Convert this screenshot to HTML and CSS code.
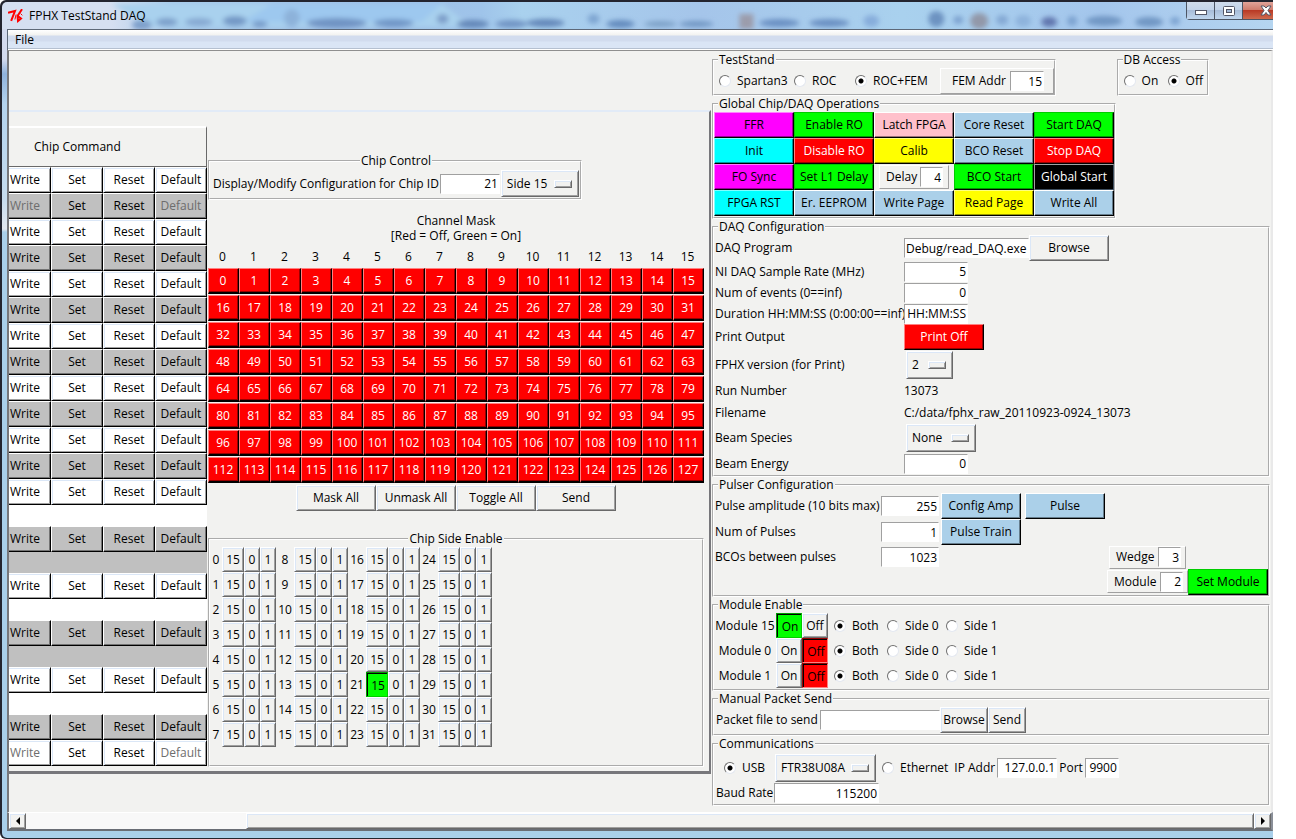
FILE: index.html
```html
<!DOCTYPE html>
<html lang="en">
<head>
<meta charset="utf-8">
<title>FPHX TestStand DAQ</title>
<link rel="stylesheet" href="styles.css">
</head>
<body>
<div class="window">
  <header class="titlebar">
    <svg class="glass" aria-hidden="true" viewBox="0 0 1272 27" preserveAspectRatio="none">
      <defs><filter id="soft" x="-20%" y="-60%" width="140%" height="220%"><feGaussianBlur stdDeviation="2.500"/></filter></defs>
      <g filter="url(#soft)">
        <path d="M110 2H440L470 25H150Z" fill="#a9d1ee"/>
        <path d="M270 2H440L420 20H240Z" fill="#9dc8ef"/>
        <ellipse cx="140" cy="23" rx="10" ry="5" fill="#7d9fca"/>
        <ellipse cx="165" cy="20" rx="11" ry="4" fill="#7c9fca"/><ellipse cx="197" cy="20" rx="14" ry="4" fill="#86a9d2"/>
        <ellipse cx="233" cy="19" rx="12" ry="5" fill="#7398c6"/><ellipse cx="258" cy="22" rx="8" ry="3" fill="#7398c6"/>
        <ellipse cx="290" cy="16" rx="8" ry="9" fill="#8db2da"/>
        <ellipse cx="335" cy="21" rx="30" ry="5" fill="#6f93c3"/><ellipse cx="392" cy="21" rx="20" ry="4" fill="#6f95c6"/>
        <ellipse cx="441" cy="17" rx="6" ry="5" fill="#7e9fca"/>
        <ellipse cx="471" cy="22" rx="16" ry="4" fill="#6487b8"/><ellipse cx="510" cy="22" rx="16" ry="4" fill="#7194c4"/><ellipse cx="544" cy="21" rx="19" ry="4" fill="#6387b9"/>
        <ellipse cx="592" cy="17" rx="6" ry="5" fill="#7fa6d2"/>
        <ellipse cx="619" cy="22" rx="14" ry="4" fill="#648bbd"/><ellipse cx="659" cy="22" rx="16" ry="3" fill="#7ca0c6"/><ellipse cx="695" cy="22" rx="17" ry="3" fill="#7095c2"/>
        <rect x="738" y="12" width="14" height="15" fill="#9b9cab"/>
        <ellipse cx="778" cy="21" rx="20" ry="4" fill="#6b90c3"/><ellipse cx="828" cy="21" rx="20" ry="4" fill="#6b90c3"/>
        <ellipse cx="870" cy="19" rx="8" ry="6" fill="#87addb"/>
        <ellipse cx="935" cy="17" rx="8" ry="8" fill="#6d93c1"/><ellipse cx="957" cy="18" rx="5" ry="4" fill="#7ba1cf"/>
        <ellipse cx="978" cy="19" rx="9" ry="8" fill="#9298a9"/><ellipse cx="1001" cy="18" rx="6" ry="5" fill="#84a9d4"/>
        <ellipse cx="1022" cy="19" rx="8" ry="6" fill="#8eb3dc"/><ellipse cx="1048" cy="20" rx="8" ry="5" fill="#6176ae"/>
        <ellipse cx="1071" cy="19" rx="5" ry="5" fill="#7da3d0"/><ellipse cx="1103" cy="19" rx="18" ry="5" fill="#7197c4"/>
        <ellipse cx="1148" cy="20" rx="14" ry="5" fill="#7197c4"/><ellipse cx="1174" cy="19" rx="5" ry="4" fill="#7ca3d0"/>
      </g>
    </svg>
    <svg class="app-icon" aria-hidden="true" viewBox="0 0 16 14"><g fill="none" stroke="#f00" stroke-linecap="square"><path d="M1 3.500L7 2L3.500 11" stroke-width="2"/><path d="M13.500 1L9.500 7L10 12L13 9.500L11 8" stroke-width="2"/><path d="M8 6L7 10M13 5L14 6" stroke-width="1"/></g></svg>
    <h1 class="title">FPHX TestStand DAQ</h1>
    <div class="caption-buttons">
      <button type="button" class="caption" aria-label="Minimize"><svg viewBox="0 0 12 5" width="12" height="5"><rect x=".5" y=".5" width="11" height="4" fill="#fff" stroke="#535666"/></svg></button>
      <button type="button" class="caption" aria-label="Maximize"><svg viewBox="0 0 12 10" width="12" height="10"><rect x=".5" y=".5" width="11" height="9" rx="1" fill="#fff" stroke="#535666"/><rect x="3.500" y="3.500" width="5" height="3" fill="#a4bad8" stroke="#535666"/></svg></button>
      <button type="button" class="caption caption-close" aria-label="Close"><svg viewBox="0 0 12 11" width="12" height="11"><path d="M1 1H4L6 3L8 1H11L8 5.500L11 10H8L6 7.500L4 10H1L4 5.500Z" fill="#fff" stroke="#535666"/></svg></button>
    </div>
  </header>

  <div class="frame">
    <nav class="menubar"><button type="button" class="menu">File</button></nav>
    <main class="client">
      <section class="chip-frame">
        <div class="commands">
          <div class="commands-head">Chip Command</div>
          <div id="command-rows"></div>
        </div>
        <div class="chip">
          <fieldset class="group chip-control">
            <legend>Chip Control</legend>
            <label for="chip-id">Display/Modify Configuration for Chip ID</label>
            <input id="chip-id" class="entry entry-c" value="21">
            <span class="option"><select class="btn w-78" aria-label="Chip side"><option>Side 15</option></select></span>
          </fieldset>
          <div class="mask-title">Channel Mask<br>[Red = Off, Green = On]</div>
          <div class="mask-head" id="mask-head"></div>
          <div class="mask" id="mask"></div>
          <div class="mask-actions">
            <button type="button" class="btn">Mask All</button><button type="button" class="btn">Unmask All</button><button type="button" class="btn">Toggle All</button><button type="button" class="btn">Send</button>
          </div>
          <fieldset class="group side-enable">
            <legend>Chip Side Enable</legend>
            <div class="sides" id="sides"></div>
          </fieldset>
        </div>
      </section>

      <section class="panel">
        <div class="top-row">
          <fieldset class="group test-stand">
            <legend>TestStand</legend>
            <label class="radio w-75"><input type="radio" name="stand">Spartan3</label>
            <label class="radio w-61"><input type="radio" name="stand">ROC</label>
            <label class="radio w-75"><input type="radio" name="stand" checked>ROC+FEM</label>
            <div class="raised fem"><label for="fem">FEM Addr</label><input id="fem" class="entry entry-s" value="15"></div>
          </fieldset>
          <fieldset class="group db-access">
            <legend>DB Access</legend>
            <label class="radio w-44"><input type="radio" name="db">On</label>
            <label class="radio"><input type="radio" name="db" checked>Off</label>
          </fieldset>
        </div>

        <fieldset class="group operations">
          <legend>Global Chip/DAQ Operations</legend>
          <div class="ops">
            <button type="button" class="btn magenta">FFR</button><button type="button" class="btn green">Enable RO</button><button type="button" class="btn pink">Latch FPGA</button><button type="button" class="btn blue">Core Reset</button><button type="button" class="btn green">Start DAQ</button>
            <button type="button" class="btn cyan">Init</button><button type="button" class="btn red">Disable RO</button><button type="button" class="btn yellow">Calib</button><button type="button" class="btn blue">BCO Reset</button><button type="button" class="btn red">Stop DAQ</button>
            <button type="button" class="btn magenta">FO Sync</button><button type="button" class="btn green">Set L1 Delay</button><div class="raised delay"><label for="delay">Delay</label><input id="delay" class="entry entry-xs" value="4"></div><button type="button" class="btn green">BCO Start</button><button type="button" class="btn black">Global Start</button>
            <button type="button" class="btn cyan">FPGA RST</button><button type="button" class="btn blue">Er. EEPROM</button><button type="button" class="btn blue">Write Page</button><button type="button" class="btn yellow">Read Page</button><button type="button" class="btn blue">Write All</button>
          </div>
        </fieldset>

        <fieldset class="group">
          <legend>DAQ Configuration</legend>
          <div class="daq">
            <label for="program">DAQ Program</label><div><input id="program" class="entry entry-l" value="Debug/read_DAQ.exe"><button type="button" class="btn">Browse</button></div>
            <label for="rate">NI DAQ Sample Rate (MHz)</label><div><input id="rate" class="entry entry-m" value="5"></div>
            <label for="events">Num of events (0==inf)</label><div><input id="events" class="entry entry-m" value="0"></div>
            <label for="duration">Duration HH:MM:SS (0:00:00==inf)</label><div><input id="duration" class="entry entry-m" value="HH:MM:SS"></div>
            <label for="print">Print Output</label><div><button type="button" id="print" class="btn red">Print Off</button></div>
            <label for="version">FPHX version (for Print)</label><div class="inset"><span class="option"><select id="version" class="btn w-47"><option>2</option></select></span></div>
            <span>Run Number</span><div><output>13073</output></div>
            <label for="file">Filename</label><div><input id="file" class="plain" readonly value="C:/data/fphx_raw_20110923-0924_13073"></div>
            <label for="species">Beam Species</label><div class="inset"><span class="option"><select id="species" class="btn w-70"><option>None</option></select></span></div>
            <label for="energy">Beam Energy</label><div><input id="energy" class="entry entry-m" value="0"></div>
          </div>
        </fieldset>

        <fieldset class="group">
          <legend>Pulser Configuration</legend>
          <div class="pulser">
            <div class="field"><label for="amp">Pulse amplitude (10 bits max)</label><input id="amp" class="entry entry-p" value="255"></div><button type="button" class="btn blue">Config Amp</button><button type="button" class="btn blue pulse">Pulse</button>
            <div class="field"><label for="pulses">Num of Pulses</label><input id="pulses" class="entry entry-p" value="1"></div><button type="button" class="btn blue">Pulse Train</button>
            <div class="field"><label for="bcos">BCOs between pulses</label><input id="bcos" class="entry entry-p" value="1023"></div><div class="raised wedge"><label for="wedge">Wedge</label><input id="wedge" class="entry entry-xs" value="3"></div>
            <div class="raised module"><label for="module">Module</label><input id="module" class="entry entry-xs" value="2"></div><button type="button" class="btn green">Set Module</button>
          </div>
        </fieldset>

        <fieldset class="group">
          <legend>Module Enable</legend>
          <div id="modules"></div>
        </fieldset>

        <fieldset class="group">
          <legend>Manual Packet Send</legend>
          <div class="line packet">
            <div class="packet-file"><label for="packet">Packet file to send</label><input id="packet" class="entry"></div>
            <button type="button" class="btn w-48">Browse</button><button type="button" class="btn w-38">Send</button>
          </div>
        </fieldset>

        <fieldset class="group">
          <legend>Communications</legend>
          <div class="line link">
            <label class="radio usb"><input type="radio" name="link" checked>USB</label>
            <span class="option"><select class="btn w-101" aria-label="USB device"><option>FTR38U08A</option></select></span>
            <label class="radio ethernet"><input type="radio" name="link">Ethernet</label>
            <label for="ip">IP Addr</label><input id="ip" class="entry entry-c" value="127.0.0.1">
            <label for="port">Port</label><input id="port" class="entry entry-s" value="9900">
          </div>
          <div class="line baud"><label for="baud">Baud Rate</label><input id="baud" class="entry entry-b" value="115200"></div>
        </fieldset>
      </section>
    </main>
    <div class="scrollbar">
      <button type="button" class="btn arrow" aria-label="Scroll left"><svg viewBox="0 0 4 8" width="4" height="8"><path d="M4 0V8L0 4Z"/></svg></button>
      <div class="trough"></div>
      <div class="thumb"></div>
      <button type="button" class="btn arrow" aria-label="Scroll right"><svg viewBox="0 0 4 8" width="4" height="8"><path d="M0 0V8L4 4Z"/></svg></button>
    </div>
  </div>
</div>
<script src="app.js"></script>
</body>
</html>
```
FILE: app.js
```javascript
const $ = (id) => document.getElementById(id);
const button = (text, cls = "", off = false) =>
  `<button type="button" class="btn ${cls}"${off ? " disabled" : ""}>${text}</button>`;
const range = (n) => Array.from({ length: n }, (_, i) => i);

/* Chip command rows: rows 13 to 17 have a second, empty line under the buttons. */
$("command-rows").innerHTML = range(19).map((i) => {
  const off = i === 1 || i === 18;
  const cls = `${i % 2 ? "odd" : "even"} ${i >= 12 && i <= 16 ? "tall" : ""}`;
  return `<div class="command ${cls}">${button("Write", "", off)}${button("Set")}${button("Reset")}${button("Default", "", off)}</div>`;
}).join("");

$("mask-head").innerHTML = range(16).map((i) => `<span>${i}</span>`).join("");
$("mask").innerHTML = range(128).map((i) => button(i, "red")).join("");

$("sides").innerHTML = range(8).map((row) => range(4).map((col) => {
  const chip = col * 8 + row;
  return `<span>${chip}</span>${button(15, chip === 21 ? "sunken green" : "")}${button(0)}${button(1)}`;
}).join("")).join("");

$("modules").innerHTML = [["Module 15", true], ["Module 0", false], ["Module 1", false]].map(([name, on], i) => {
  const sides = ["Both", "Side 0", "Side 1"].map((side, j) =>
    `<label class="radio"><input type="radio" name="side${i}"${j ? "" : " checked"}>${side}</label>`).join("");
  return `<div class="module-row"><span>${name}</span>${button("On", on ? "sunken green" : "")}${button("Off", on ? "" : "sunken red")}${sides}</div>`;
}).join("");
```
FILE: styles.css
```css
* { box-sizing: border-box; }

:root {
  --face: #f2f2f0;
  --shade: #a0a0a0;
  --dark: #696969;
  --light: #dbe7f7;
}

body {
  margin: 0;
  background: #fff;
  color: #000;
  font: 12px/16px "Open Sans", "Noto Sans", sans-serif;
}

button, input, select { font: inherit; color: inherit; margin: 0; border-radius: 0; }
label { white-space: nowrap; }

.window {
  display: flex;
  flex-direction: column;
  min-height: 100vh;
  margin-right: 23px;
  padding: 2px 0 1px 2px;
  background: #23242f;
  border-top-left-radius: 6px;
  border-bottom-left-radius: 6px;
}

/* Title bar */
.titlebar {
  position: relative;
  display: flex;
  align-items: center;
  height: 27px;
  padding-left: 6px;
  overflow: hidden;
  background: linear-gradient(90deg, #d5dff1 0, #d5dff1 110px, #a8caea 170px, #9ebfe6 380px, #9fc4ea 480px, #a9d1ee 520px, #a5c5ea 700px, #a9d1ee 900px, #a4c6ec 1100px, #b5d5f0 100%);
  border-top-left-radius: 5px;
}
.glass { position: absolute; inset: 0; width: 100%; height: 100%; }
.app-icon { position: relative; width: 16px; height: 14px; }
.title { position: relative; margin: 0 auto 0 5px; font-size: 12px; font-weight: 400; }
.caption-buttons {
  position: relative;
  display: flex;
  align-self: flex-start;
  height: 18px;
  border: solid #4c5564;
  border-width: 0 0 1px 1px;
  border-bottom-left-radius: 4px;
}
.caption {
  display: flex;
  align-items: center;
  justify-content: center;
  width: 28px;
  padding: 0;
  border: 0;
  border-right: 1px solid #4c5564;
  background: linear-gradient(#cfdcec, #c3d4ea 45%, #a8bdd9 50%, #c0d6ee);
}
.caption:first-child { padding-top: 4px; }
.caption-close {
  width: 30px;
  padding-left: 15px;
  border-right: 0;
  background: linear-gradient(#e0a399, #cf7c6d 45%, #b93a25 50%, #cf6a4e);
}

/* Window frame */
.frame {
  flex: 1;
  display: flex;
  flex-direction: column;
  padding: 0 0 7px 5px;
  background: linear-gradient(180deg, #d3daee 0, #d3daee 30px, #8fb2dc 45px, #b4d3ee 75px, #c6dbee 170px, #e3e8ef 200px, #a9cfea 203px, #a9cfea 100%);
  border-bottom-left-radius: 5px;
}
.menubar {
  height: 21px;
  border: solid #5d6878;
  border-width: 1px 0 0 1px;
  background: linear-gradient(#fff 0, #f2f2f0 5px, #d2dcee 6px, #d2dcee 11px, #dae5f5 12px, #dae5f5 18px, #b5c0d0 18px, #b5c0d0 19px, #fff 19px, #fff 100%);
}
.menu { padding: 2px 7px; border: 0; background: none; }
.client {
  flex: 1;
  display: flex;
  background: var(--face);
  border: solid;
  border-width: 1px 2px 0 2px;
  border-color: #8f8f8f #e9e9e9 #8f8f8f #77777b;
}

/* Widgets */
.btn {
  display: flex;
  align-items: center;
  justify-content: center;
  width: 80px;
  height: 26px;
  padding: 0;
  border: 1px solid;
  border-color: #fff var(--dark) var(--dark) #fff;
  background: var(--face);
  box-shadow: inset 1px 1px var(--light), inset -1px -1px var(--shade);
  white-space: nowrap;
}
.btn:disabled { color: #6d6d6d; }
.red, .green, .magenta, .cyan, .yellow, .blue, .pink { border-color: #fff #000 #000 #fff; }
.red { color: #fff; background: #f00; border-color: #ff8080 #000 #000 #ff8080; box-shadow: inset -1px -1px #900; }
.green { background: #0f0; border-color: #0c0 #000 #000 #0c0; box-shadow: inset -1px -1px #090; }
.magenta { background: #f0f; border-color: #ff80ff #000 #000 #ff80ff; box-shadow: inset -1px -1px #909; }
.cyan { background: #0ff; border-color: #80ffff #000 #000 #80ffff; box-shadow: inset -1px -1px #099; }
.yellow { background: #ff0; border-color: #ffff80 #000 #000 #ffff80; box-shadow: inset -1px -1px #990; }
.blue { background: #abd0e9; box-shadow: inset -1px -1px #667d8c; }
.pink { background: #ffc0cb; box-shadow: inset -1px -1px #99737a; }
.black { color: #fff; background: #000; border-color: #a0a0a0 #405060 #405060 #a0a0a0; box-shadow: none; }
.sunken { padding: 2px 0 0 2px; color: #000; }
.sunken.green { border-color: #090 #0c0 #0c0 #090; box-shadow: inset 1px 1px #000; }
.sunken.red { border-color: #900 #ff8080 #ff8080 #900; box-shadow: inset 1px 1px #000; }

.entry {
  height: 20px;
  width: 64px;
  padding: 0 1px;
  border: 1px solid;
  border-color: var(--shade) #fff #fff var(--shade);
  background: #fff;
  text-align: right;
}
.entry-xs { width: 23px; }
.entry-s { width: 34px; }
.entry-p { width: 58px; }
.entry-c { width: 60px; }
.entry-b { width: 105px; }
.entry-l { width: 125px; text-align: left; }
.plain { width: 230px; padding: 0; border: 0; background: none; }

.option { position: relative; display: inline-flex; }
.option select { appearance: none; height: 28px; padding: 0 0 0 5px; }
.option::after {
  content: "";
  position: absolute;
  right: 7px;
  top: 10px;
  width: 16px;
  height: 6px;
  border: 1px solid;
  border-color: #fff var(--dark) var(--dark) #fff;
  box-shadow: inset 1px 1px var(--light), inset -1px -1px var(--shade);
  pointer-events: none;
}

.radio { display: flex; align-items: center; gap: 6px; }
.radio input {
  appearance: none;
  width: 12px;
  height: 12px;
  border: 1px solid;
  border-color: #707070 #e4e8f0 #e4e8f0 #707070;
  border-radius: 50%;
  background: #fff;
}
.radio input:checked { background: radial-gradient(circle, #000 2px, #fff 3px); }

.group {
  min-width: 0;
  margin: 0;
  padding: 0 0 1px;
  border: 2px groove #fff;
}
.group legend { height: 16px; margin-left: 4px; padding: 0 1px; }
.raised {
  display: flex;
  align-items: center;
  border: 1px solid;
  border-color: #fff var(--shade) var(--shade) #fff;
}

/* Chip commands, channel mask, side enable */
.chip-frame {
  flex: none;
  display: flex;
  align-self: flex-start;
  margin-top: 59px;
  padding: 0 5px 4px 0;
  border: solid;
  border-width: 2px 2px 3px 0;
  border-color: #e2ebf7 #77777b #77777b;
}
.commands { width: 198px; margin-top: 14px; overflow: hidden; }
.commands-head {
  height: 41px;
  padding: 11px 0 0 25px;
  border: solid;
  border-width: 2px 1px 1px 0;
  border-color: #fff var(--dark) var(--dark);
}
.command { display: flex; height: 26px; background: #fff; }
.command .btn { flex: none; width: 52px; background: #fff; border-color: #fff #000 #000 #fff; }
.command .btn:first-child { margin-left: -10px; }
.odd, .odd .btn { background: #c0c0c0; }
.odd .btn { box-shadow: inset -1px -1px #737373; border-color: #fff #000 #000 #fff; }
.tall { height: 47px; }

.chip { display: flex; flex-direction: column; width: 496px; margin-left: 1px; }
.chip-control {
  align-self: flex-start;
  display: flex;
  align-items: center;
  gap: 1px;
  margin-top: 41px;
  padding: 1px 1px 1px 3px;
}
.chip-control .btn { height: 27px; }
.chip-control legend, .side-enable legend { margin: 0 auto; }
.mask-title { margin-top: 13px; line-height: 15px; text-align: center; }
.mask-head, .mask { display: grid; grid-template-columns: repeat(16, 31px); }
.mask-head { margin: 6px 0 3px; text-align: center; }
.mask-head span { padding-right: 2px; }
.mask { row-gap: 1px; }
.mask .btn { width: 31px; height: 26px; padding-right: 1px; border-bottom-width: 2px; }
.mask-actions { display: flex; justify-content: center; margin-top: 2px; }
.side-enable { height: 236px; margin-top: 20px; }
.sides {
  display: grid;
  grid-template-columns: 12px 22px 16px 16px repeat(3, 18px 22px 16px 16px);
  grid-auto-rows: 25px;
  align-items: center;
  text-align: center;
}
.sides .btn { width: 100%; height: 25px; }

/* Right-hand panel */
.panel { flex: 1; display: flex; flex-direction: column; min-width: 0; margin-left: 1px; padding: 1px 1px 0 0; }
.top-row { display: flex; justify-content: space-between; padding-right: 61px; }
.test-stand, .db-access { display: flex; align-items: center; height: 44px; padding: 0 0 0 5px; }
.test-stand legend, .db-access legend { margin-left: -1px; }
.test-stand { width: 344px; }
.w-75 { width: 75px; }
.w-61 { width: 61px; }
.w-44 { width: 44px; }
.fem { width: 114px; height: 26px; margin-left: auto; padding: 0 9px 0 11px; justify-content: space-between; }
.db-access { padding-right: 4px; }
.operations { align-self: flex-start; }
.ops { display: grid; grid-template-columns: repeat(5, 80px); }
.delay { width: 70px; height: 24px; margin: 1px 5px; padding: 0 5px 0 6px; justify-content: space-between; }

.daq {
  display: grid;
  grid-template-columns: 189px 1fr;
  grid-template-rows: 26px repeat(3, 21px) 26px 29px 23px 21px 30px 21px;
  align-items: center;
  padding-left: 1px;
}
.daq div { display: flex; align-items: center; }
.daq .inset { padding-left: 2px; }

.pulser {
  display: grid;
  grid-template-columns: 226px 84px 82px 81px 80px;
  grid-template-rows: 26px 26px 24px 25px;
  align-items: center;
  padding-left: 1px;
}
.field { display: flex; align-items: center; justify-content: space-between; grid-column: 1; padding-right: 2px; }
.wedge, .module { grid-column: 4; height: 23px; padding: 0 4px 0 6px; justify-content: space-between; }
.wedge { margin: 0 2px; }

.module-row {
  display: grid;
  grid-template-columns: 62px 26px 26px 6px 53px 59px 1fr;
  align-items: center;
  height: 25px;
}
.module-row > span { text-align: center; }
.module-row .btn { width: 26px; height: 25px; }
.module-row .radio:nth-of-type(1) { grid-column: 5; }

.line { display: flex; align-items: center; padding-left: 2px; }
.packet-file { display: flex; align-items: center; gap: 2px; width: 224px; }
.packet-file .entry { flex: 1; min-width: 0; }
.w-38 { width: 38px; }
.w-47 { width: 47px; }
.w-48 { width: 48px; }
.w-70 { width: 70px; }
.w-78 { width: 78px; }
.w-101 { width: 101px; }
.link { height: 31px; gap: 2px; }
.usb { width: 57px; padding-left: 8px; }
.ethernet { margin: 0 4px; }
.baud label { width: 58px; }

/* Scroll bar */
.scrollbar {
  display: flex;
  height: 19px;
  border: solid;
  border-width: 1px 2px 2px;
  border-color: #fff #8a8f98 #696d75 #77777b;
  background: var(--face);
}
.scrollbar > * { height: 16px; }
.arrow { flex: none; width: 17px; }
.trough { flex: 221; background: #f8f8f8; }
.thumb { flex: 1008; border: 1px solid; border-color: #fff var(--dark) var(--dark) #fff; box-shadow: inset 1px 1px var(--light), inset -1px -1px var(--shade); }
```
